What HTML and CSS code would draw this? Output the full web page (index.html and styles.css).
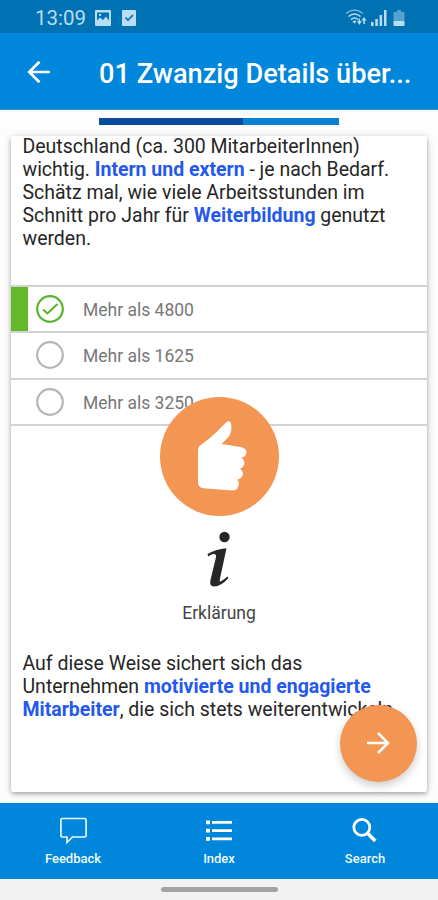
FILE: index.html
```html
<!DOCTYPE html>
<html lang="de">
<head>
<meta charset="utf-8">
<title>01 Zwanzig Details</title>
<link rel="stylesheet" href="styles.css">
</head>
<body>
<div class="screen">
  <div class="status">
    <span class="clock">13:09</span>
    <svg class="st-image" width="16" height="16" viewBox="0 0 16 16"><path fill="currentColor" fill-rule="evenodd" d="M1 0h14v0q1 0 1 1v14q0 1-1 1H1q-1 0-1-1V1q0-1 1-1zM2 2.500v8l3-3 3 2.500 3-3.500 3 4V2.500zM4 4h2v2H4z"/></svg>
    <svg class="st-check" width="14" height="16" viewBox="0 0 14 16"><rect width="14" height="16" rx="1" fill="currentColor"/><path d="M3.500 7.500l2.500 2.500 5-5" fill="none" stroke="#0071b2" stroke-width="1.700"/></svg>
    <span class="grow"></span>
    <svg class="st-wifi" width="22" height="17" viewBox="0 0 22 17"><g fill="none" stroke="currentColor" stroke-width="1.600"><path d="M1 4.500Q9.500-2.500 18 4.500" opacity=".65"/><path d="M3.500 7.500Q9.500 2.500 15.500 7.500M6 10.500q3.500-3 7 0"/></g><path fill="currentColor" d="M7.500 12.200q2-1.600 4 0l-2 2.500zM12 12h1.700V9.500h1.300V12h1.700l-2.350 4zM16.500 11.500l2.500-3.500 2.500 3.500h-1.700v3.500h-1.500v-3.500z"/></svg>
    <svg class="st-signal" width="16" height="16" viewBox="0 0 16 16"><path fill="currentColor" d="M0 12h2.500v4H0zM4.300 9h2.500v7H4.300zM8.600 5h2.500v11H8.600zM13 0h2.500v16H13z"/></svg>
    <svg class="st-battery" width="12" height="16" viewBox="0 0 12 16"><path fill="currentColor" opacity=".45" d="M4 0h4v2h3.500v9H.5V2H4z"/><path fill="currentColor" d="M.5 11h11v4q0 1-1 1h-9q-1 0-1-1z"/></svg>
  </div>
  <header class="appbar">
    <svg width="24" height="24" viewBox="0 0 24 24" fill="none" stroke="#fff" stroke-width="2.700"><path d="M23 12H3M12.500 1.700L2.200 12l10.300 10.300"/></svg>
    <h1>01 Zwanzig Details über...</h1>
  </header>
  <main class="content">
    <div class="progress"><div class="progress-done"></div></div>
    <section class="card">
      <p class="text question">Deutschland (ca. 300 MitarbeiterInnen)<br>wichtig. <b>Intern und extern</b> - je nach Bedarf.<br>Schätz mal, wie viele Arbeitsstunden im<br>Schnitt pro Jahr für <b>Weiterbildung</b> genutzt<br>werden.</p>
      <ul class="options">
        <li class="correct"><svg width="28" height="28" viewBox="0 0 28 28" fill="none" stroke="#57b32a"><circle cx="14" cy="14" r="12.800" stroke-width="2.200"/><path d="M7 14.500l4.500 4L21.500 9" stroke-width="2"/></svg><span>Mehr als 4800</span></li>
        <li><svg width="28" height="28" viewBox="0 0 28 28" fill="none" stroke="#b5b5b5"><circle cx="14" cy="14" r="12.800" stroke-width="2.200"/></svg><span>Mehr als 1625</span></li>
        <li><svg width="28" height="28" viewBox="0 0 28 28" fill="none" stroke="#b5b5b5"><circle cx="14" cy="14" r="12.800" stroke-width="2.200"/></svg><span>Mehr als 3250</span></li>
      </ul>
      <div class="explain">
        <svg width="24" height="58" viewBox="0 0 24 58" fill="#272727"><circle cx="17.500" cy="6" r="5.200"/><path d="M.500 23Q8 18.500 19.500 17.300L13 47.500Q12 51.500 14.500 50Q17.500 48 20.500 45.500L21.500 47Q14 55.500 7 55.500Q2 55 3.500 49L9 26Q9.500 22.500 6 23Q3.500 23.500 1.200 25.500z"/></svg>
        <span>Erklärung</span>
      </div>
      <p class="text answer">Auf diese Weise sichert sich das<br>Unternehmen <b>motivierte und engagierte</b><br><b>Mitarbeiter</b>, die sich stets weiterentwickeln</p>
      <div class="thumb">
        <svg width="119" height="119" viewBox="0 0 119 119"><path fill="#fff" d="M40 48.500Q49 42.500 56 35.500L66 25.500Q69.500 22.500 71 26.500Q72.500 33.500 69 39.500L61.500 47L80.500 50Q86.500 51 86.500 55.500Q86 59.500 81.500 61Q85 63.500 84.300 67Q83.500 70.500 80 71.800Q83.500 74.500 82.800 77.500Q82 81.500 77.500 82.500Q79.500 85.500 78.500 88.500Q77.500 93.500 73 93.500L46 91.500Q38 91 38 86V53.500Q38 50.500 40 48.500z"/></svg>
      </div>
      <div class="next"><svg width="24" height="24" viewBox="0 0 24 24" fill="none" stroke="#fff" stroke-width="2.500"><path d="M1 12h20M12 2l10 10-10 10"/></svg></div>
    </section>
  </main>
  <nav class="tabs">
    <div><svg width="30" height="30" viewBox="0 0 30 30" fill="none" stroke="#e8f7ff" stroke-width="1.700"><path d="M4.500 3.500h22q1.600 0 1.600 1.600v15.300q0 1.600-1.600 1.600H14.500L9 27.500v-5.500h-4.500q-1.600 0-1.600-1.600V5.100Q2.900 3.500 4.500 3.500z"/></svg><span>Feedback</span></div>
    <div><svg width="30" height="30" viewBox="0 0 30 30" fill="#fff"><path d="M2 5.500h4v3.700H2zM8 6h20v2.700H8zM2 13.800h4v3.700H2zM8 14.300h20V17H8zM2 22h4v3.700H2zM8 22.500h20v2.700H8z"/></svg><span>Index</span></div>
    <div><svg width="30" height="30" viewBox="0 0 30 30" fill="none" stroke="#fff"><circle cx="11.800" cy="12.300" r="8" stroke-width="2.800"/><path d="M17.300 18l8 8" stroke-width="3.600"/></svg><span>Search</span></div>
  </nav>
  <div class="home"><div class="pill"></div></div>
</div>
</body>
</html>
```

FILE: styles.css
```css
* { box-sizing: border-box; }
body { margin: 0; font-family: Roboto, "Liberation Sans", sans-serif; }
svg { display: block; flex: none; }
h1, p, ul { margin: 0; padding: 0; }
.screen { width: 438px; height: 900px; display: flex; flex-direction: column; overflow: hidden; background: #fff; }
.status { height: 33px; flex: none; display: flex; align-items: center; padding: 2px 33px 0 35px; background: #0071b2; color: #b9ddf2; }
.clock { font-size: 20.500px; width: 60px; line-height: 24px; white-space: nowrap; }
.st-check { margin-left: 11px; }
.grow { flex: 1; }
.st-signal { margin-left: 4px; }
.st-battery { margin-left: 6px; }
.appbar { height: 77px; flex: none; display: flex; align-items: center; padding: 2px 0 0 27px; background: #0086da; color: #fff; border-bottom: 1px solid #2d94d6; }
.appbar h1 { margin: 3px 0 0 48px; font-size: 27.200px; font-weight: 500; line-height: 32px; white-space: nowrap; }
.content { flex: 1; display: flex; flex-direction: column; padding: 8px 11px 11px; background: #fdfdfd; }
.progress { width: 240px; height: 7px; margin-left: 88px; background: #0b7fd0; }
.progress-done { width: 60%; height: 100%; background: #0b4b9c; }
.card { position: relative; flex: 1; margin-top: 11px; background: #fff; border-radius: 2px; box-shadow: 0 2px 4px rgba(0,0,0,.28), 0 1px 10px rgba(0,0,0,.12); }
.text { padding-left: 11.500px; font-size: 19.480px; line-height: 23.100px; color: #262626; white-space: nowrap; }
.text b { font-weight: 700; color: #2459ec; }
.question { margin-top: -1px; height: 151px; }
.options { list-style: none; margin-top: -1px; border-top: 2px solid #d3d3d3; }
.options li { display: flex; align-items: center; height: 46.300px; padding-left: 25px; border-bottom: 2px solid #d3d3d3; font-size: 17.500px; color: #777; }
.options .correct { background: linear-gradient(#64b82a, #64b82a) left / 17px 100% no-repeat; }
.options span { margin-left: 19px; padding-top: 2px; }
.explain { display: flex; flex-direction: column; align-items: center; margin-top: 105.600px; color: #444; font-size: 17.500px; line-height: 22px; }
.explain span { margin-top: 13px; }
.answer { margin-top: 27.500px; }
.thumb { position: absolute; left: 149px; top: 261px; width: 119px; height: 119px; border-radius: 50%; background: #f49653; }
.next { position: absolute; left: 328.500px; top: 568.500px; width: 77px; height: 77px; border-radius: 50%; background: #f49653; display: flex; align-items: center; justify-content: center; box-shadow: 0 4px 8px rgba(0,0,0,.2); }
.tabs { height: 76px; flex: none; display: flex; background: #0086da; color: #effaff; }
.tabs div { flex: 1; display: flex; flex-direction: column; align-items: center; padding-top: 12px; font-size: 13px; line-height: 16px; font-weight: 500; }
.tabs span { margin-top: 6px; }
.home { height: 21px; flex: none; display: flex; justify-content: center; padding-top: 8px; background: #f2f2f2; }
.pill { width: 117px; height: 5px; border-radius: 3px; background: #a3a3a3; }
```
